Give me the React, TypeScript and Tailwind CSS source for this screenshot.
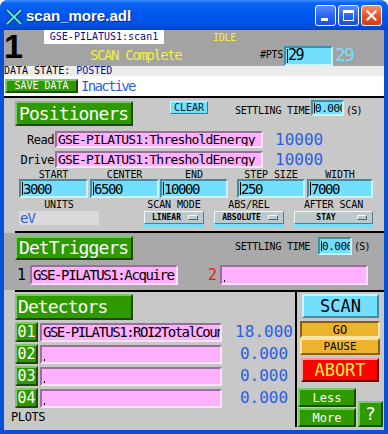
import React from "react";

const raisedGreen =
  "bg-[#2e9a00] border-2 border-t-[#7cc868] border-l-[#7cc868] border-r-[#1c4a08] border-b-[#1c4a08] text-white";
const sunkenCyan =
  "bg-[#73dfff] border-2 border-t-[#3f8ca4] border-l-[#3f8ca4] border-r-[#c6f4ff] border-b-[#c6f4ff] text-black overflow-hidden";
const sunkenPink =
  "bg-[#ffb0ff] border-2 border-t-[#9c6c9c] border-l-[#9c6c9c] border-r-[#ffe0ff] border-b-[#ffe0ff] text-black overflow-hidden";

function Cursor({ h = 12 }: { h?: number }) {
  return <span className="w-[1px] bg-black shrink-0" style={{ height: h }} />;
}

function Dot() {
  return <span className="w-[1px] h-[2px] bg-black self-end mb-[1px] ml-[1px]" />;
}

function CyanInput({ value, w, h }: { value: string; w: string; h: string }) {
  return (
    <div className={`${sunkenCyan} ${w} ${h} flex items-center pl-[1px] shrink-0`}>
      <Cursor h={13} />
      <span className="text-[14px] tracking-[-1.4px] leading-none whitespace-nowrap">{value}</span>
    </div>
  );
}

function MenuBtn({ label, w }: { label: string; w: string }) {
  return (
    <div className={`${w} flex flex-col`}>
      <div className="mt-[2px] h-[13px] bg-[#bccace] border border-t-[#eef8fa] border-l-[#eef8fa] border-r-[#5f7880] border-b-[#5f7880] flex items-center">
        <span className="flex-1 text-center text-[8px] font-bold leading-none">{label}</span>
        <span className="w-[10px] h-[5px] mr-[5px] bg-[#bccace] border border-t-[#f4fbfc] border-l-[#f4fbfc] border-r-[#4d646c] border-b-[#4d646c]" />
      </div>
      <div className="h-[3px] bg-[#73dfff]" />
    </div>
  );
}

function TitleBar() {
  return (
    <div className="h-[30px] shrink-0 flex items-center pl-[5px] pr-[6px] bg-[linear-gradient(180deg,#3f8fff_0%,#0b63f2_10%,#0058ee_45%,#0053e4_80%,#0044cc_100%)]">
      <svg width="18" height="16" viewBox="0 0 18 16" className="mt-[3px]">
        <path d="M2 1 L16 15" stroke="#10306a" strokeWidth="4" />
        <path d="M16 1 L2 15" stroke="#10306a" strokeWidth="4" />
        <path d="M2 1 L16 15" stroke="#4ee8e8" strokeWidth="2" />
        <path d="M16 1 L2 15" stroke="#4ee8e8" strokeWidth="2" />
      </svg>
      <span className="ml-[3px] text-white font-bold text-[15px] leading-none font-['Liberation_Sans',sans-serif] [text-shadow:1px_1px_#0a2a8a]">
        scan_more.adl
      </span>
      <div className="ml-auto flex gap-[2px]">
        <div className="w-[21px] h-[21px] rounded-[3px] border border-white bg-[linear-gradient(180deg,#5a8cff,#2460ec_60%,#1c4fd8)] flex items-end pl-[5px] pb-[4px]">
          <span className="w-[7px] h-[3px] bg-white" />
        </div>
        <div className="w-[21px] h-[21px] rounded-[3px] border border-white bg-[linear-gradient(180deg,#5a8cff,#2460ec_60%,#1c4fd8)] flex items-center justify-center">
          <span className="w-[11px] h-[11px] border border-white border-t-[3px]" />
        </div>
        <div className="w-[21px] h-[21px] rounded-[3px] border border-white bg-[linear-gradient(180deg,#f0906c,#e0542c_55%,#c8401c)] flex items-center justify-center">
          <svg width="11" height="11" viewBox="0 0 11 11">
            <path d="M1.5 1.5 L9.5 9.5 M9.5 1.5 L1.5 9.5" stroke="#fff" strokeWidth="2.2" strokeLinecap="square" />
          </svg>
        </div>
      </div>
    </div>
  );
}

function TopArea() {
  return (
    <div className="h-[36px] shrink-0 bg-[#a3a3a3] flex">
      <div className="w-[40px] h-[30px] font-['Liberation_Sans',sans-serif] font-bold text-[34px] leading-[30px] mt-[1px] text-black">1</div>
      <div className="flex flex-col">
        <div className="flex h-[14px] items-center">
          <div className="w-[120px] h-[14px] bg-white text-[10px] text-[#0a0a8c] flex items-center justify-center leading-none">
            GSE-PILATUS1:scan1
          </div>
          <div className="ml-[49px] mt-[1px] text-[10px] tracking-[-0.3px] text-[#f4ee3c] leading-none">IDLE</div>
        </div>
        <div className="flex items-center h-[22px]">
          <div className="w-[216px] pl-[46px] text-[14px] tracking-[-1.4px] text-[#f4ee3c] leading-none whitespace-nowrap">
            SCAN Complete
          </div>
          <div className="w-[24px] text-[10px] tracking-[-0.3px] leading-none text-black">#PTS</div>
          <div className="w-[49px] h-[20px] mt-[1px] bg-[#73dfff] border-2 border-t-[#3f8ca4] border-l-[#3f8ca4] border-r-[#c6f4ff] border-b-[#c6f4ff] flex items-center pl-[1px]">
            <Cursor h={14} />
            <span className="text-[15px] tracking-[-1.5px] leading-none">29</span>
          </div>
          <div className="ml-[2px] text-[18px] tracking-[-1.8px] leading-none text-[#73dfff]">29</div>
        </div>
      </div>
    </div>
  );
}

function Positioners() {
  const cols = [
    { l: "START", v: "3000", cls: "ml-[4px] w-[69px]" },
    { l: "CENTER", v: "6500", cls: "ml-[2px] w-[69px]" },
    { l: "END", v: "10000", cls: "ml-[1px] w-[68px]" },
    { l: "STEP SIZE", v: "250", cls: "ml-[9px] w-[68px]" },
    { l: "WIDTH", v: "7000", cls: "ml-[2px] w-[66px]" },
  ];
  return (
    <div className="h-[133px] shrink-0 flex flex-col pl-[11px] bg-[#c8c8c8]">
      <div className="mt-[2px] h-[26px] flex items-start">
        <div className={`${raisedGreen} mt-[1px] w-[118px] h-[25px] flex items-center pl-[2px] text-[18px] tracking-[-0.9px] leading-none`}>
          Positioners
        </div>
        <div className="ml-[37px] mt-[1px] w-[38px] h-[13px] bg-[#73dfff] border border-t-[#d2f7ff] border-l-[#d2f7ff] border-r-[#337c92] border-b-[#337c92] flex items-center justify-center text-[10px] leading-none text-[#0c2238]">
          CLEAR
        </div>
        <div className="ml-[27px] mt-[6px] text-[10px] tracking-[-0.25px] leading-none whitespace-nowrap">SETTLING TIME</div>
        <div className={`${sunkenCyan} ml-[1px] w-[33px] h-[16px] flex items-center pl-[1px]`}>
          <Cursor h={10} />
          <span className="text-[11px] tracking-[-0.5px] leading-none whitespace-nowrap">0.000</span>
        </div>
        <div className="ml-[2px] mt-[6px] text-[10px] tracking-[-0.8px] leading-none">(S)</div>
      </div>
      {[
        ["Read", "mt-[5px]"],
        ["Drive", "mt-[3px]"],
      ].map(([lab, mt]) => (
        <div key={lab} className={`${mt} h-[17px] flex items-center`}>
          <div className="w-[40px] text-right text-[12px] tracking-[-0.5px] leading-none pr-[1px]">{lab}</div>
          <div className={`${sunkenPink} w-[208px] h-[17px] flex items-center pl-[1px]`}>
            <span className="text-[13px] tracking-[-0.8px] leading-[13px] mt-[-1px] whitespace-nowrap">GSE-PILATUS1:ThresholdEnergy</span>
          </div>
          <div className="ml-[12px] text-[16px] leading-none text-[#2b5fe0]">10000</div>
        </div>
      ))}
      <div className="mt-[3px] flex">
        {cols.map((c) => (
          <div key={c.l} className={`${c.cls} flex flex-col items-center`}>
            <div className="h-[8px] text-[10px] leading-[8px] tracking-[-0.1px] whitespace-nowrap">{c.l}</div>
            <CyanInput value={c.v} w="w-full" h="h-[19px]" />
          </div>
        ))}
      </div>
      <div className="mt-[3px] flex">
        <div className="ml-[4px] w-[80px] flex flex-col items-center">
          <div className="h-[8px] text-[10px] leading-[8px] tracking-[-0.1px]">UNITS</div>
          <div className="mt-[2px] w-full h-[14px] bg-[#dadada] flex items-center pl-[1px] text-[14px] tracking-[-1px] leading-none text-[#2b5fe0]">
            eV
          </div>
        </div>
        <div className="ml-[45px] w-[60px] flex flex-col items-center">
          <div className="h-[8px] text-[10px] leading-[8px] tracking-[-0.1px] whitespace-nowrap">SCAN MODE</div>
          <MenuBtn label="LINEAR" w="w-full" />
        </div>
        <div className="ml-[10px] w-[70px] flex flex-col items-center">
          <div className="h-[8px] text-[10px] leading-[8px] tracking-[-0.1px] whitespace-nowrap">ABS/REL</div>
          <MenuBtn label="ABSOLUTE" w="w-full" />
        </div>
        <div className="ml-[10px] w-[79px] flex flex-col items-center">
          <div className="h-[8px] text-[10px] leading-[8px] tracking-[-0.1px] whitespace-nowrap">AFTER SCAN</div>
          <MenuBtn label="STAY" w="w-full" />
        </div>
      </div>
    </div>
  );
}

function DetTriggers() {
  return (
    <div className="h-[57px] shrink-0 flex flex-col pl-[11px] bg-[#a9a9a9]">
      <div className="flex items-start h-[27px]">
        <div className={`${raisedGreen} mt-[3px] w-[118px] h-[24px] flex items-center pl-[2px] text-[18px] tracking-[-0.9px] leading-none`}>
          DetTriggers
        </div>
        <div className="ml-[102px] mt-[9px] text-[10px] tracking-[-0.25px] leading-none whitespace-nowrap">SETTLING TIME</div>
        <div className={`${sunkenCyan} ml-[8px] mt-[4px] w-[34px] h-[18px] flex items-center pl-[1px]`}>
          <Cursor h={10} />
          <span className="text-[11px] tracking-[-0.5px] leading-none whitespace-nowrap">0.000</span>
        </div>
        <div className="ml-[2px] mt-[9px] text-[10px] tracking-[-0.8px] leading-none">(S)</div>
      </div>
      <div className="mt-[5px] h-[20px] flex items-center">
        <div className="ml-[2px] w-[13px] text-[15px] leading-none">1</div>
        <div className={`${sunkenPink} w-[148px] h-[20px] flex items-center pl-[1px]`}>
          <span className="text-[14px] tracking-[-1.4px] leading-none whitespace-nowrap">GSE-PILATUS1:Acquire</span>
        </div>
        <div className="ml-[30px] w-[12px] text-[15px] leading-none text-[#ff1010]">2</div>
        <div className={`${sunkenPink} w-[148px] h-[20px] flex items-center pl-[1px]`}>
          <Dot />
        </div>
      </div>
    </div>
  );
}

function Detectors() {
  const rows = [
    { n: "01", pv: "GSE-PILATUS1:ROI2TotalCounts", v: "18.000" },
    { n: "02", pv: "", v: "0.000" },
    { n: "03", pv: "", v: "0.000" },
    { n: "04", pv: "", v: "0.000" },
  ];
  return (
    <div className="flex-1 flex bg-[#c8c8c8]">
      <div className="w-[291px] flex flex-col pl-[11px]">
        <div className={`${raisedGreen} mt-[2px] w-[118px] h-[26px] flex items-center pl-[1px] text-[18px] tracking-[-0.9px] leading-none`}>
          Detectors
        </div>
        <div className="mt-[2px] flex flex-col gap-[2px]">
          {rows.map((r) => (
            <div key={r.n} className="h-[20px] flex items-center">
              <div className={`${raisedGreen} w-[23px] h-[20px] flex items-center justify-center text-[15px] leading-none`}>
                {r.n}
              </div>
              <div className={`${sunkenPink} ml-[2px] w-[182px] h-[19px] flex items-center pl-[1px]`}>
                {r.pv ? (
                  <span className="text-[14px] tracking-[-1.5px] leading-none whitespace-nowrap">{r.pv}</span>
                ) : (
                  <Dot />
                )}
              </div>
              <div className="ml-[18px] w-[48px] flex justify-center">
                <span className="text-[16px] leading-none text-[#2b5fe0] whitespace-nowrap">{r.v}</span>
              </div>
            </div>
          ))}
        </div>
        <div className="-ml-[4px] mt-[3px] text-[12px] tracking-[-0.4px] leading-none">PLOTS</div>
      </div>
      <div className="w-[2px] h-[135px] bg-black" />
      <div className="flex flex-col">
        <div className="ml-[5px] mt-[2px] w-[77px] h-[24px] bg-[#73dfff] border-2 border-t-[#c6f4ff] border-l-[#c6f4ff] border-r-[#3f8ca4] border-b-[#3f8ca4] flex items-center justify-center text-[17px] leading-none text-black">
          SCAN
        </div>
        <div className="ml-[3px] mt-[3px] w-[80px] h-[17px] bg-[#ecb42c] border-2 border-t-[#8a6010] border-l-[#8a6010] border-r-[#ffe4a8] border-b-[#ffe4a8] flex items-center justify-center text-[12px] leading-none">
          GO
        </div>
        <div className="ml-[3px] w-[80px] h-[17px] bg-[#ecb42c] border-2 border-t-[#ffe4a8] border-l-[#ffe4a8] border-r-[#8a6010] border-b-[#8a6010] flex items-center justify-center text-[11px] leading-none">
          PAUSE
        </div>
        <div className="ml-[4px] mt-[3px] w-[78px] h-[24px] bg-[#fd0000] border-2 border-t-[#ff9c9c] border-l-[#ff9c9c] border-r-[#7a0000] border-b-[#7a0000] flex items-center justify-center text-[17px] leading-none text-[#fff23a]">
          ABORT
        </div>
        <div className="mt-[6px] flex">
          <div className="ml-[1px] flex flex-col">
            <div className={`${raisedGreen} w-[58px] h-[19px] flex items-center justify-center text-[12px] leading-none`}>Less</div>
            <div className={`${raisedGreen} mt-[1px] w-[58px] h-[19px] flex items-center justify-center text-[12px] leading-none`}>More</div>
          </div>
          <div className={`${raisedGreen} ml-[2px] mt-[13px] w-[25px] h-[26px] flex items-center justify-center text-[18px] leading-none`}>?</div>
        </div>
      </div>
    </div>
  );
}

export default function App() {
  return (
    <div className="w-[388px] h-[434px] bg-[#0a4fd8] rounded-t-[8px] overflow-hidden flex flex-col font-['DejaVu_Sans_Mono',monospace]">
      <TitleBar />
      <div className="mx-[4px] h-[400px] bg-[#c8c8c8] flex flex-col overflow-hidden">
        <TopArea />
        <div className="h-[10px] shrink-0 bg-[#ececec] flex items-center text-[10px] leading-none whitespace-nowrap">
          <span className="text-black">DATA STATE:&nbsp;</span>
          <span className="text-[#0a0a9c]">POSTED</span>
        </div>
        <div className="h-[20px] shrink-0 bg-white flex items-center">
          <div className={`${raisedGreen} ml-[1px] w-[73px] h-[14px] flex items-center justify-center text-[10px] leading-none`}>SAVE DATA</div>
          <div className="ml-[3px] text-[14px] tracking-[-1.7px] leading-none text-[#2b5fe0]">Inactive</div>
        </div>
        <div className="h-[2px] shrink-0 bg-black" />
        <Positioners />
        <div className="ml-[11px] h-[2px] shrink-0 bg-black" />
        <DetTriggers />
        <div className="ml-[11px] h-[2px] shrink-0 bg-black" />
        <Detectors />
      </div>
    </div>
  );
}
